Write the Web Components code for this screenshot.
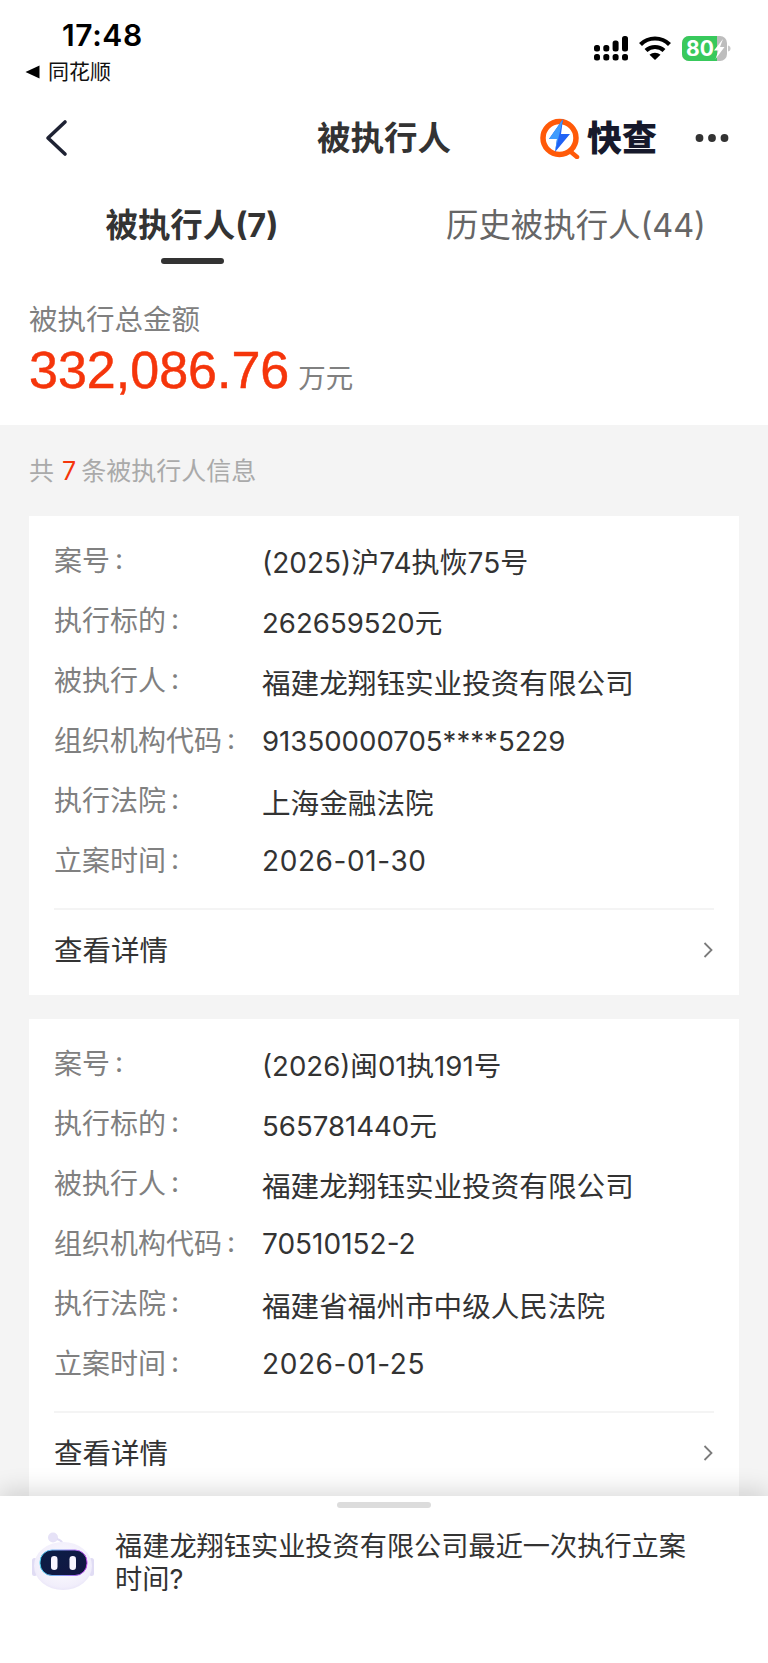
<!DOCTYPE html>
<html lang="zh">
<head>
<meta charset="utf-8">
<title>被执行人</title>
<style>
  html, body { margin: 0; padding: 0; }
  body {
    width: 768px;
    height: 1663px;
    overflow: hidden;
    position: relative;
    background: #f4f4f4;
    font-family: Inter, "Noto Sans CJK SC", sans-serif;
  }
</style>
</head>
<body>
<status-bar></status-bar>
<nav-bar></nav-bar>
<tab-bar></tab-bar>
<amount-summary></amount-summary>
<case-list>
  <case-card>
    <info-row label="案号" mixed>(2025)沪74执恢75号</info-row>
    <info-row label="执行标的" num>262659520元</info-row>
    <info-row label="被执行人">福建龙翔钰实业投资有限公司</info-row>
    <info-row label="组织机构代码" num>91350000705****5229</info-row>
    <info-row label="执行法院">上海金融法院</info-row>
    <info-row label="立案时间" date>2026-01-30</info-row>
  </case-card>
  <case-card>
    <info-row label="案号" num>(2026)闽01执191号</info-row>
    <info-row label="执行标的" num>565781440元</info-row>
    <info-row label="被执行人">福建龙翔钰实业投资有限公司</info-row>
    <info-row label="组织机构代码" mixed>70510152-2</info-row>
    <info-row label="执行法院">福建省福州市中级人民法院</info-row>
    <info-row label="立案时间" date>2026-01-25</info-row>
  </case-card>
</case-list>
<ask-sheet>福建龙翔钰实业投资有限公司最近一次执行立案时间?</ask-sheet>

<script>
class StatusBar extends HTMLElement {
    constructor() {
        super();
        this.attachShadow({ mode: 'open' });
        this.shadowRoot.innerHTML = `
            <style>
                :host { display: flex; justify-content: space-between; height: 96px; background: #fff; color: #000; }
                .left { padding: 17px 0 0 25px; }
                .time { font-size: 30px; line-height: 36px; font-weight: 600; margin-left: 37px; letter-spacing: .6px; }
                .back { display: flex; align-items: center; gap: 8px; font-size: 21px; line-height: 28px; margin-top: 5px; color: #111; }
                .right { display: flex; align-items: flex-start; gap: 11px; padding: 36px 0 0 0; margin-right: 37px; }
                svg { display: block; }
            </style>
            <div class="left">
                <div class="time">17:48</div>
                <div class="back">
                    <svg width="15" height="14" viewBox="0 0 15 14"><path d="M14.500 .5V13.500L.5 7Z" fill="#000"/></svg>
                    <span>同花顺</span>
                </div>
            </div>
            <div class="right">
                <svg width="34" height="25" viewBox="0 0 34 25" fill="#000">
                    <rect x="0" y="9" width="6" height="6.500" rx="2.500"/><rect x="0" y="18" width="6" height="6.500" rx="2.500"/>
                    <rect x="9.300" y="9" width="6" height="6.500" rx="2.500"/><rect x="9.300" y="18" width="6" height="6.500" rx="2.500"/>
                    <rect x="18.600" y="4.500" width="6" height="11" rx="2.500"/><rect x="18.600" y="18" width="6" height="6.500" rx="2.500"/>
                    <rect x="28" y="0" width="6" height="15.500" rx="2.500"/><rect x="28" y="18" width="6" height="6.500" rx="2.500"/>
                </svg>
                <svg width="32" height="24" viewBox="0 0 32 24" fill="none" stroke="#000" stroke-width="4.200">
                    <path d="M1.500 8.500C9.500 .5 22.500 .5 30.500 8.500"/>
                    <path d="M7 14.500C12 9.800 20 9.800 25 14.500"/>
                    <path d="M16 24L10.500 18.800C13.500 15.900 18.500 15.900 21.500 18.800Z" fill="#000" stroke="none"/>
                </svg>
                <svg width="49" height="26" viewBox="0 0 49 26">
                    <rect width="45" height="25" rx="7" fill="#bdbdbd"/>
                    <path d="M7 0H35V25H7A7 7 0 0 1 0 18V7A7 7 0 0 1 7 0Z" fill="#38c95c"/>
                    <path d="M46 9.500C48 10 48.500 11 48.500 12.500S48 15 46 15.500Z" fill="#c8c8c8"/>
                    <text x="4" y="20" font-size="21" font-weight="700" fill="#fff" font-family="Inter, sans-serif">80</text>
                    <path d="M41 3L32 14.500H36.500L33.500 23L42.500 11H38Z" fill="#fff"/>
                </svg>
            </div>
        `;
    }
}

class NavBar extends HTMLElement {
    constructor() {
        super();
        this.attachShadow({ mode: 'open' });
        this.shadowRoot.innerHTML = `
            <style>
                :host { display: grid; grid-template-columns: 1fr auto 1fr; align-items: center; height: 84px; background: #fff; }
                .back { padding-left: 44px; }
                h1 { margin: 0; font-size: 33.500px; line-height: 44px; font-weight: 700; color: #333; }
                .tools { display: flex; align-items: center; justify-content: flex-end; padding-right: 39px; }
                .name { font-size: 35px; line-height: 44px; font-weight: 900; color: #16192b; margin-left: 6px; }
                .more { margin-left: 38px; }
                svg { display: block; }
            </style>
            <div class="back">
                <svg width="24" height="38" viewBox="0 0 24 38" fill="none"><path d="M21 3L4 19L21 35" stroke="#1e2233" stroke-width="3.600" stroke-linecap="round" stroke-linejoin="round"/></svg>
            </div>
            <h1>被执行人</h1>
            <div class="tools">
                <svg width="41" height="41" viewBox="0 0 41 41">
                    <circle cx="19.500" cy="20" r="16.500" fill="none" stroke="#ff5a09" stroke-width="5.500"/>
                    <path d="M31 34L37 39" stroke="#ff5a09" stroke-width="4.500" stroke-linecap="round"/>
                    <path d="M23 1L9 21H17L15 34L30 16H21Z" fill="#2062f5"/>
                    <path d="M23 1L9 21H17L15 34Z" fill="#3f9cfd"/>
                </svg>
                <span class="name">快查</span>
                <svg class="more" width="34" height="10" viewBox="0 0 34 10" fill="#333"><circle cx="4.500" cy="5" r="3.900"/><circle cx="17" cy="5" r="3.900"/><circle cx="29.500" cy="5" r="3.900"/></svg>
            </div>
        `;
    }
}

class TabBar extends HTMLElement {
    constructor() {
        super();
        this.attachShadow({ mode: 'open' });
        this.shadowRoot.innerHTML = `
            <style>
                :host { display: grid; grid-template-columns: 384px 384px; height: 87px; background: #fff; }
                .tab { display: flex; flex-direction: column; align-items: center; padding-top: 24px; font-size: 32.400px; line-height: 44px; color: #666; }
                .on { color: #333; font-weight: 700; }
                .on i { display: block; width: 63px; height: 6px; border-radius: 3px; background: #333; margin-top: 10px; }
            </style>
            <div class="tab on"><span>被执行人(7)</span><i></i></div>
            <div class="tab"><span>历史被执行人(44)</span></div>
        `;
    }
}

class AmountSummary extends HTMLElement {
    constructor() {
        super();
        this.attachShadow({ mode: 'open' });
        this.shadowRoot.innerHTML = `
            <style>
                :host { display: block; height: 158px; padding: 34px 0 0 29px; box-sizing: border-box; background: #fff; }
                .label { font-size: 28.500px; line-height: 38px; color: #808080; }
                .total { display: flex; align-items: baseline; height: 60px; margin-top: 1px; }
                b { font-family: "Liberation Sans", Arial, sans-serif; font-size: 52px; line-height: 60px; font-weight: 400; color: #f5350b; -webkit-text-stroke: .5px #f5350b; }
                span { font-size: 27.500px; color: #808080; margin-left: 9px; }
            </style>
            <div class="label">被执行总金额</div>
            <div class="total"><b>332,086.76</b><span>万元</span></div>
        `;
    }
}

class CaseList extends HTMLElement {
    constructor() {
        super();
        this.attachShadow({ mode: 'open' });
        this.shadowRoot.innerHTML = `
            <style>
                :host { display: flex; flex-direction: column; gap: 24px; padding: 0 29px; background: #f4f4f4; }
                .count { font-size: 25px; line-height: 34px; color: #aaa; padding-top: 29px; margin-bottom: 4px; word-spacing: -2px; }
                .count em { font-style: normal; color: #f5350b; margin-left: 3px; }
            </style>
            <div class="count">共 <em>7</em> 条被执行人信息</div>
            <slot></slot>
        `;
    }
}

class CaseCard extends HTMLElement {
    constructor() {
        super();
        this.attachShadow({ mode: 'open' });
        this.shadowRoot.innerHTML = `
            <style>
                :host { display: block; background: #fff; padding: 15px 25px 0; height: 479px; box-sizing: border-box; }
                .more { display: flex; justify-content: space-between; align-items: center; height: 84px; box-sizing: border-box; padding-bottom: 5px; border-top: 2px solid #f4f4f4; margin-top: 17px; font-size: 28.500px; color: #333; }
                svg { display: block; margin-right: 1px; margin-top: 3px; }
            </style>
            <slot></slot>
            <div class="more">
                <span>查看详情</span>
                <svg width="10" height="16" viewBox="0 0 10 16" fill="none"><path d="M1.500 1L8.500 8L1.500 15" stroke="#7b7b7b" stroke-width="1.800"/></svg>
            </div>
        `;
    }
}

class InfoRow extends HTMLElement {
    constructor() {
        super();
        this.attachShadow({ mode: 'open' });
        this.shadowRoot.innerHTML = `
            <style>
                :host { display: grid; grid-template-columns: 208px 1fr; height: 60px; align-items: center; font-size: 28px; }
                .label { color: #808080; position: relative; top: -2px; }
                .label i { font-style: normal; margin-left: 5px; position: relative; top: -2px; }
                .value { color: #333; font-size: 28.600px; }
                :host([num]) .value { font-size: 27.600px; }
                :host([mixed]) .value { font-size: 28px; }
                :host([date]) .value { font-size: 28px; letter-spacing: .6px; }
            </style>
            <span class="label"><span class="name"></span><i>:</i></span>
            <span class="value"><slot></slot></span>
        `;
    }

    connectedCallback() {
        this.shadowRoot.querySelector('.name').textContent = this.getAttribute('label') || '';
    }
}

class AskSheet extends HTMLElement {
    constructor() {
        super();
        this.attachShadow({ mode: 'open' });
        this.shadowRoot.innerHTML = `
            <style>
                :host { position: absolute; left: 0; right: 0; bottom: 0; height: 167px; display: block; background: #fff; box-shadow: 0 -6px 22px rgba(0,0,0,.14); }
                .handle { position: absolute; left: 337px; top: 6px; width: 94px; height: 6px; border-radius: 3px; background: #dcdcdc; }
                .body { display: flex; align-items: flex-start; padding: 34px 73px 0 31px; }
                .text { flex: 1; margin-left: 20px; font-size: 27.200px; line-height: 33px; color: #333; }
                svg { display: block; flex: none; margin-top: 2px; }
            </style>
            <div class="handle"></div>
            <div class="body">
                <svg width="64" height="62" viewBox="0 0 64 62">
                    <defs>
                        <radialGradient id="head" cx=".5" cy=".45" r=".65"><stop offset="0" stop-color="#fff"/><stop offset=".75" stop-color="#f1eefb"/><stop offset="1" stop-color="#e0dbf4"/></radialGradient>
                        <linearGradient id="face" x1="0" y1="0" x2="1" y2="1"><stop offset="0" stop-color="#0a1f47"/><stop offset="1" stop-color="#131441"/></linearGradient>
                        <linearGradient id="rim" x1="0" y1="0" x2="1" y2="0"><stop offset="0" stop-color="#4fd6f2"/><stop offset="1" stop-color="#c44df0"/></linearGradient>
                    </defs>
                    <circle cx="22" cy="5.500" r="5" fill="#e6e2f7"/>
                    <path d="M26 7C29 8 31 9 31 11" fill="none" stroke="#e0dcf4" stroke-width="2"/>
                    <rect x="1" y="26" width="5" height="18" rx="2.500" fill="#e0dcf4"/>
                    <rect x="58" y="26" width="5" height="18" rx="2.500" fill="#e0dcf4"/>
                    <ellipse cx="32" cy="34" rx="29" ry="24" fill="url(#head)"/>
                    <rect x="9" y="18" width="47" height="25.500" rx="12" fill="url(#face)" stroke="url(#rim)" stroke-width="1"/>
                    <rect x="20" y="24" width="6.500" height="14" rx="3.200" fill="#f7f5ff"/>
                    <rect x="38.500" y="24" width="6.500" height="14" rx="3.200" fill="#f7f5ff"/>
                </svg>
                <div class="text"><slot></slot></div>
            </div>
        `;
    }
}

customElements.define('status-bar', StatusBar);
customElements.define('nav-bar', NavBar);
customElements.define('tab-bar', TabBar);
customElements.define('amount-summary', AmountSummary);
customElements.define('case-list', CaseList);
customElements.define('case-card', CaseCard);
customElements.define('info-row', InfoRow);
customElements.define('ask-sheet', AskSheet);
</script>
</body>
</html>
